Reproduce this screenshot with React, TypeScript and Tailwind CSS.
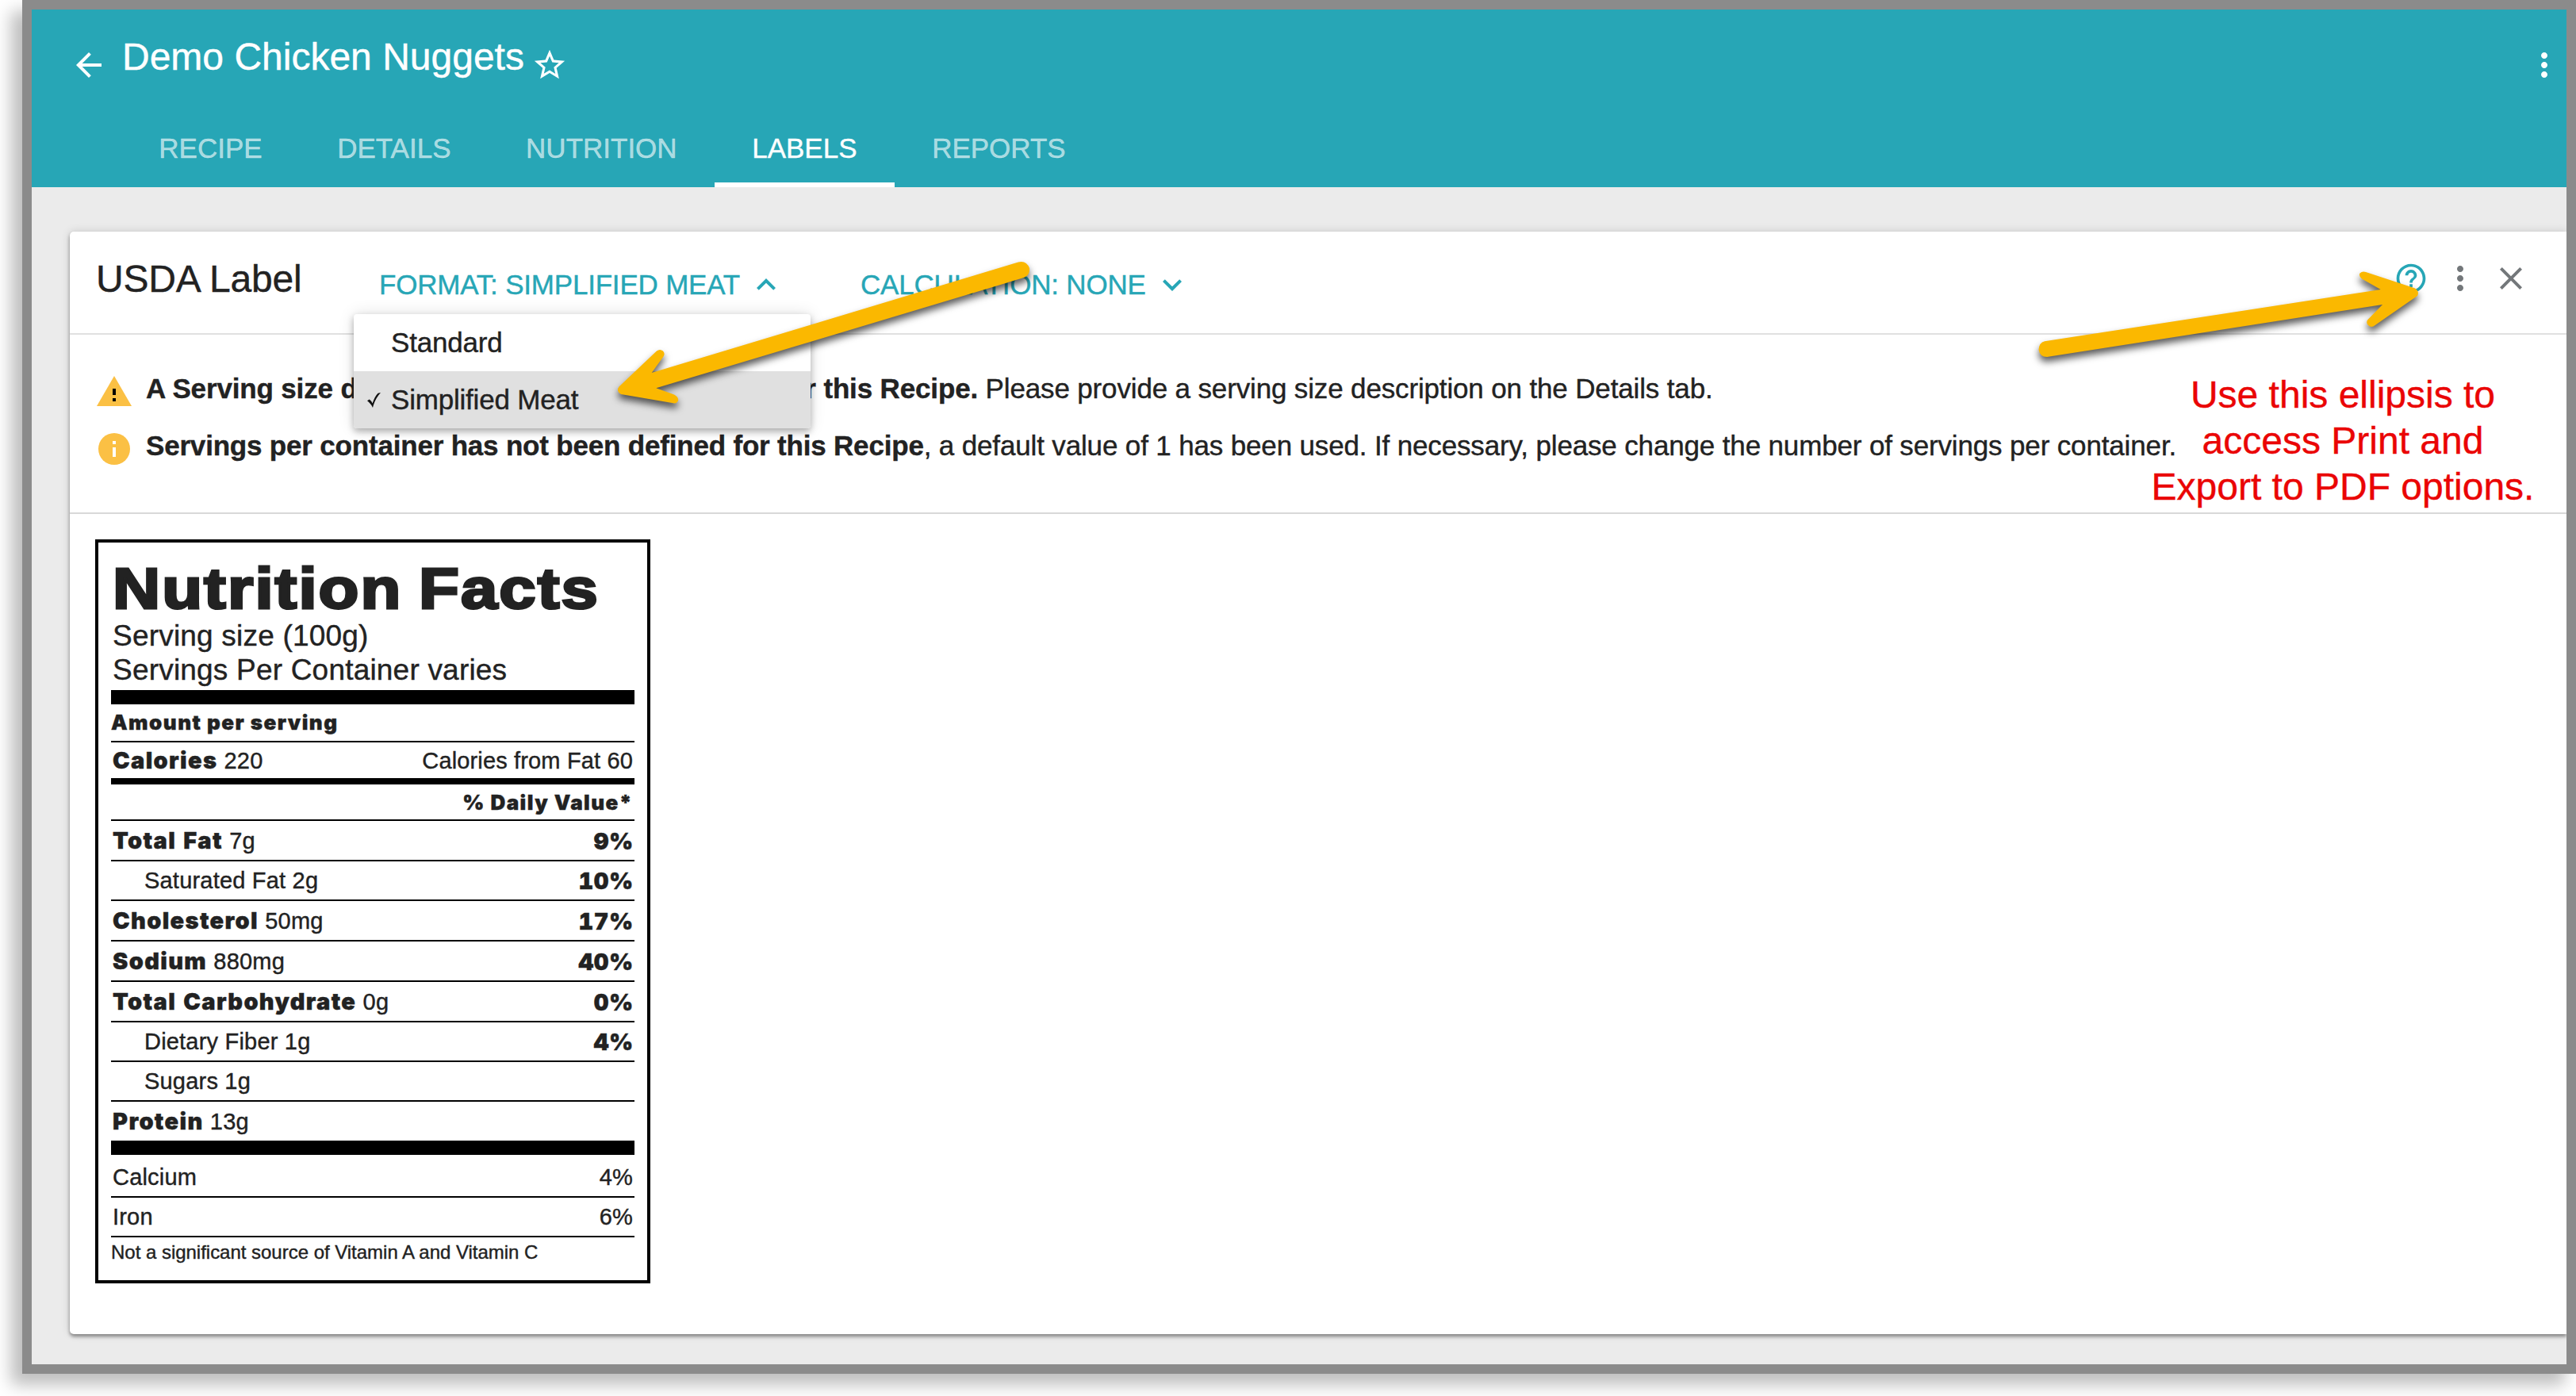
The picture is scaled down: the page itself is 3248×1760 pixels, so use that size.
import type { ReactNode } from 'react'

const tabs = ['RECIPE', 'DETAILS', 'NUTRITION', 'LABELS', 'REPORTS']

const nutrients = [
  { name: 'Total Fat', amount: '7g', dv: '9%' },
  { name: 'Saturated Fat', amount: '2g', dv: '10%', sub: true },
  { name: 'Cholesterol', amount: '50mg', dv: '17%' },
  { name: 'Sodium', amount: '880mg', dv: '40%' },
  { name: 'Total Carbohydrate', amount: '0g', dv: '0%' },
  { name: 'Dietary Fiber', amount: '1g', dv: '4%', sub: true },
  { name: 'Sugars', amount: '1g', dv: '', sub: true },
]

const Icon = ({ d, className }: { d: string; className: string }) => (
  <svg viewBox="0 0 24 24" fill="currentColor" className={`shrink-0 ${className}`}>
    <path d={d} />
  </svg>
)

const paths = {
  back: 'M20 11H7.83l5.59-5.59L12 4l-8 8 8 8 1.41-1.41L7.83 13H20v-2z',
  star: 'M22 9.24l-7.19-.62L12 2 9.19 8.63 2 9.24l5.46 4.73L5.82 21 12 17.27 18.18 21l-1.63-7.03L22 9.24zM12 15.4l-3.76 2.27 1-4.28-3.32-2.88 4.38-.38L12 6.1l1.71 4.04 4.38.38-3.32 2.88 1 4.28L12 15.4z',
  more: 'M12 8c1.1 0 2-.9 2-2s-.9-2-2-2-2 .9-2 2 .9 2 2 2zm0 2c-1.1 0-2 .9-2 2s.9 2 2 2 2-.9 2-2-.9-2-2-2zm0 6c-1.1 0-2 .9-2 2s.9 2 2 2 2-.9 2-2-.9-2-2-2z',
  up: 'M12 8l-6 6 1.41 1.41L12 10.83l4.59 4.58L18 14z',
  down: 'M16.59 8.59L12 13.17 7.41 8.59 6 10l6 6 6-6z',
  close: 'M19 6.41L17.59 5 12 10.59 6.41 5 5 6.41 10.59 12 5 17.59 6.41 19 12 13.41 17.59 19 19 17.59 13.41 12z',
  help: 'M11 18h2v-2h-2v2zm1-16C6.48 2 2 6.48 2 12s4.48 10 10 10 10-4.48 10-10S17.52 2 12 2zm0 18c-4.41 0-8-3.59-8-8s3.59-8 8-8 8 3.59 8 8-3.59 8-8 8zm0-14c-2.21 0-4 1.79-4 4h2c0-1.1.9-2 2-2s2 .9 2 2c0 2-3 1.75-3 5h2c0-2.25 3-2.5 3-5 0-2.21-1.79-4-4-4z',
}

function Header() {
  return (
    <header className="h-[224px] bg-[#27a6b6] text-white">
      <div className="flex h-[140px] items-start pr-1 pl-12">
        <Icon d={paths.back} className="mt-[46px] size-12" />
        <h1 className="mt-8 ml-[18px] text-[48px] leading-[56px] whitespace-nowrap">Demo Chicken Nuggets</h1>
        <Icon d={paths.star} className="mt-[47px] ml-[9px] size-[46px]" />
        <Icon d={paths.more} className="mt-[46px] ml-auto size-12" />
      </div>
      <nav className="flex pl-[113px]">
        {tabs.map(tab => (
          <div
            key={tab}
            className={`h-[84px] border-b-[6px] px-[47.3px] pt-[15px] text-[35px] leading-[40px] ${
              tab === 'LABELS' ? 'border-white' : 'border-transparent text-white/60'
            }`}
          >
            {tab}
          </div>
        ))}
      </nav>
    </header>
  )
}

function CardHeader() {
  return (
    <div className="flex h-[130px] items-start border-b-2 border-[#e0e0e0] pr-[46px] pl-[33px]">
      <h2 className="mt-[32px] w-[357px] text-[48px] leading-[56px] tracking-[-0.2px]">USDA Label</h2>
      <div className="mt-[43px] flex w-[607px] gap-[9px] text-[35px] leading-[48px] tracking-[-0.2px] text-[#27a6b6]">
        <span>FORMAT: SIMPLIFIED MEAT</span>
        <Icon d={paths.up} className="size-12" />
      </div>
      <div className="mt-[43px] flex gap-[9px] text-[35px] leading-[48px] tracking-[-0.2px] text-[#27a6b6]">
        <span>CALCULATION: NONE</span>
        <Icon d={paths.down} className="size-12" />
      </div>
      <div className="ml-auto flex items-center pt-[35px] text-[#73777a]">
        <Icon d={paths.help} className="mr-4 size-[44px] text-[#27a6b6]" />
        <Icon d={paths.more} className="mr-4 size-12" />
        <Icon d={paths.close} className="size-12" />
      </div>
    </div>
  )
}

function FormatMenu() {
  return (
    <div className="absolute top-[104px] left-[358px] h-[144px] w-[576px] rounded-[4px] bg-white text-[35px] leading-[40px] tracking-[-0.2px] shadow-[0_4px_8px_rgba(0,0,0,0.28),0_0_20px_rgba(0,0,0,0.12)]">
      <div className="flex h-[72px] items-center pl-[47px]">Standard</div>
      <div className="flex h-[72px] items-center rounded-b-[4px] bg-[#e0e0e0]">
        <svg viewBox="0 0 17 19" className="mr-[13px] ml-[17px] h-[19px] w-[17px]" fill="#111">
          <path d="M0 10.2L2.8 8.6Q5.4 10.6 6.6 13.6Q9.6 4.6 13.6 0.8L17 0Q9.6 8 7 19Q4.6 13.6 0 10.2Z" />
        </svg>
        Simplified Meat
      </div>
    </div>
  )
}

function Messages() {
  return (
    <div className="h-[226px] border-b-2 border-[#d8d8d8] pt-9 pl-8 text-[35px] leading-[40px] tracking-[-0.15px] whitespace-nowrap">
      <div className="flex h-[72px] items-center gap-4">
        <svg viewBox="0 0 24 24" className="size-12 shrink-0">
          <path d="M1 21h22L12 2z" fill="#fbc044" />
          <path d="M11 10h2v4h-2zM11 16h2v2h-2z" fill="#000" />
        </svg>
        <p className="pb-[9px]">
          <b>A Serving size description has not been defined for this Recipe.</b> Please provide a
          serving size description on the Details tab.
        </p>
      </div>
      <div className="flex h-[72px] items-center gap-4">
        <svg viewBox="0 0 24 24" className="size-12 shrink-0">
          <circle cx="12" cy="12" r="10" fill="#fbc044" />
          <path d="M11 7h2v2h-2zM11 11h2v6h-2z" fill="#fff" />
        </svg>
        <p className="pb-[9px]">
          <b className="tracking-[-0.19px]">Servings per container has not been defined for this Recipe</b>, a default value of 1 has been used. If
          necessary, please change the number of servings per container.
        </p>
      </div>
    </div>
  )
}

const Heavy = ({ children }: { children: ReactNode }) => (
  <span className="font-[Inter] leading-none font-black tracking-[1.35px] [word-spacing:2px]">{children}</span>
)

function NutritionLabel() {
  return (
    <section className="mt-8 ml-8 h-[938px] w-[700px] border-4 border-black px-4 text-[29px] tracking-[0.2px] whitespace-nowrap">
      <h3 className="mt-5 ml-0.5 h-[76px] w-[500px] origin-left scale-x-[1.156] text-[72px] leading-[76px] font-bold tracking-[1.8px] [word-spacing:-4px] [-webkit-text-stroke:3px_#222]">
        Nutrition Facts
      </h3>
      <div className="h-[90px] pl-0.5 text-[37px] leading-[43px]">
        <p>Serving size (100g)</p>
        <p>Servings Per Container varies</p>
      </div>
      <div className="h-[18px] bg-black" />
      <div className="h-12 border-b-2 border-black font-[Inter] text-[26px] leading-[46px] font-black tracking-[1.45px]">
        Amount per serving
      </div>
      <div className="flex h-[45px] justify-between px-0.5 pt-px leading-[45px]">
        <span><Heavy>Calories</Heavy> 220</span>
        <span className="tracking-[0.15px]">Calories from Fat 60</span>
      </div>
      <div className="h-2 bg-black" />
      <div className="h-[46px] border-b-2 border-black pr-0.5 text-right font-[Inter] text-[26px] leading-[46px] font-black tracking-[1.43px]">
        % Daily Value*
      </div>
      {nutrients.map(n => (
        <div
          key={n.name}
          className={`flex justify-between border-b-2 border-black pr-px leading-[48px] ${
            n.sub ? 'h-[50px] pl-[42px]' : 'h-[51px] pt-px pl-0.5'
          }`}
        >
          <span>{n.sub ? n.name : <Heavy>{n.name}</Heavy>} {n.amount}</span>
          <span className="pt-px font-[Inter] leading-[48px] font-black tracking-[0.6px] tabular-nums">{n.dv}</span>
        </div>
      ))}
      <div className="h-[49px] pt-px pl-0.5 leading-[48px]"><Heavy>Protein</Heavy> 13g</div>
      <div className="h-[18px] bg-black" />
      <div className="flex h-[54px] justify-between border-b-2 border-black px-0.5 pt-1 leading-[48px]">
        <span>Calcium</span>
        <span>4%</span>
      </div>
      <div className="flex h-[50px] justify-between border-b-2 border-black px-0.5 leading-[48px]">
        <span>Iron</span>
        <span>6%</span>
      </div>
      <p className="text-[24px] leading-[38px] tracking-[-0.02px]">Not a significant source of Vitamin A and Vitamin C</p>
    </section>
  )
}

// Callout arrows drawn on top of the page
function Arrows() {
  return (
    <svg
      viewBox="0 0 3248 1760"
      fill="#fbb800"
      className="pointer-events-none absolute inset-0 h-[1760px] w-[3248px] [filter:drop-shadow(0_6px_5px_rgba(0,0,0,0.65))]"
    >
      <path d="M821.7 470L1284 330.5Q1294 328 1298 338Q1299 347 1291 350L827.3 489.3L850 497.5Q856 500.5 855 505.5Q853 509 849 508.3L783 497Q776.5 493 780.5 487.5L828 442.5Q832 439.5 836 442.5Q839 446 836.5 449.5Z" />
      <path d="M2578 430.3L3001.7 365L2978 351.5Q2973.5 347.5 2975.5 344.5Q2978.5 341.5 2983 343L3044.5 363.3Q3051 367 3048 373L2992.5 411.5Q2988 413 2985.5 409.5Q2983 406 2985.5 403L3004 384L2581 450Q2572 450 2570.5 441Q2571 432 2578 430.3Z" />
    </svg>
  )
}

export default function App() {
  return (
    <div className="relative h-[1760px] w-[3248px] overflow-hidden bg-white pl-[28px] font-['Liberation_Sans',Arial,sans-serif] text-[#222] [-webkit-text-stroke-width:0.4px]">
      <div className="h-[1732px] border-12 border-[#8b8b8b] bg-[#ebebeb] shadow-[-14px_14px_20px_rgba(0,0,0,0.26)]">
        <Header />
        <main className="h-[1484px] overflow-hidden pt-14 pl-12">
          <div className="relative h-[1390px] rounded-l-[5px] bg-white shadow-[0_3px_4px_rgba(0,0,0,0.4),0_0_12px_rgba(0,0,0,0.14)]">
            <CardHeader />
            <Messages />
            <NutritionLabel />
            <FormatMenu />
          </div>
        </main>
      </div>
      <Arrows />
      <p className="absolute top-[469px] left-[2654px] w-[600px] text-center text-[48px] leading-[58px] text-[#ea0505]">
        Use this ellipsis to
        <br />
        access Print and
        <br />
        Export to PDF options.
      </p>
    </div>
  )
}
